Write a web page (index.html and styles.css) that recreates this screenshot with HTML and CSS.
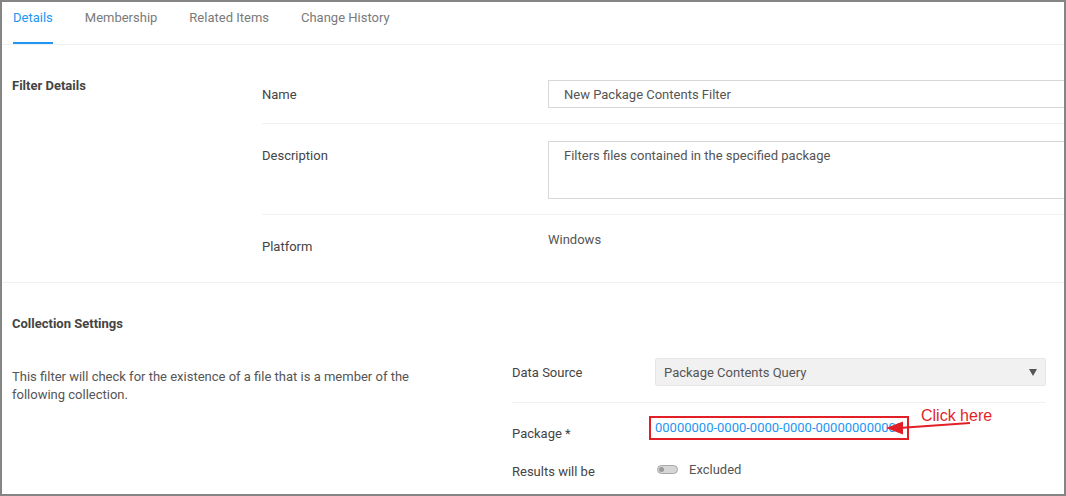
FILE: index.html
```html
<!DOCTYPE html>
<html lang="en">
<head>
<meta charset="utf-8">
<title>Filter</title>
<link rel="stylesheet" href="styles.css">
</head>
<body>
<div class="frame">
  <nav class="tabs">
    <div class="tab active">Details</div>
    <div class="tab">Membership</div>
    <div class="tab">Related Items</div>
    <div class="tab">Change History</div>
  </nav>

  <section class="section filter">
    <div class="section-title">Filter Details</div>
    <div class="fields">
      <div class="row row-name">
        <div class="label">Name</div>
        <div class="value"><div class="input">New Package Contents Filter</div></div>
      </div>
      <div class="row row-desc">
        <div class="label">Description</div>
        <div class="value"><div class="textarea">Filters files contained in the specified package</div></div>
      </div>
      <div class="row row-platform">
        <div class="label">Platform</div>
        <div class="value text">Windows</div>
      </div>
    </div>
  </section>

  <section class="collection">
    <div class="coll-title">Collection Settings</div>
    <div class="coll-body">
      <p class="coll-desc">This filter will check for the existence of a file that is a member of the following collection.</p>
      <div class="coll-fields">
        <div class="crow crow-source">
          <div class="label">Data Source</div>
          <div class="value">
            <div class="select"><span>Package Contents Query</span><span class="caret"></span></div>
          </div>
        </div>
        <div class="crow crow-package">
          <div class="label">Package *</div>
          <div class="value text">
            <span class="anchor">
              <a class="link" href="#">00000000-0000-0000-0000-000000000000</a>
              <span class="annot-box"></span>
              <svg class="annot-arrow" width="90" height="22" viewBox="0 0 90 22">
                <line x1="14" y1="13" x2="85" y2="8" stroke="#e21f26" stroke-width="2"/>
                <polygon points="1,13 18,6.5 18,19.5" fill="#e21f26"/>
              </svg>
              <span class="annot-text">Click here</span>
            </span>
          </div>
        </div>
        <div class="crow crow-results">
          <div class="label">Results will be</div>
          <div class="value text toggle-wrap">
            <span class="toggle"><span class="knob"></span></span>
            <span>Excluded</span>
          </div>
        </div>
      </div>
    </div>
  </section>
</div>
</body>
</html>
```

FILE: styles.css
```css
* { box-sizing: border-box; }
html, body { margin: 0; padding: 0; background: #fff; }
body {
  font-family: Roboto, "Liberation Sans", Arial, sans-serif;
  font-size: 13px;
  line-height: 15px;
  color: #444;
}
.frame {
  width: 1066px;
  height: 496px;
  border: 2px solid #858585;
  overflow: hidden;
  background: #fff;
}

/* tabs */
.tabs {
  display: flex;
  gap: 32px;
  padding-left: 11px;
  border-bottom: 1px solid #f1f1f1;
  height: 43px;
}
.tab {
  height: 42px;
  padding-top: 8px;
  color: #7a7a7a;
  border-bottom: 2px solid transparent;
}
.tab.active {
  color: #2196f3;
  border-bottom-color: #2196f3;
}

/* filter details */
.section.filter {
  display: flex;
  border-bottom: 1px solid #f1f1f1;
}
.section-title {
  width: 260px;
  flex: none;
  padding: 33px 0 0 10px;
  font-weight: 700;
  color: #444;
}
.fields {
  flex: 1;
  min-width: 0;
  padding-top: 19px;
}
.row {
  display: grid;
  grid-template-columns: 286px 1fr;
}
.label { padding-top: 7px; color: #444; }
.value { min-width: 0; color: #555; }
.row-name { padding: 16px 0 15px; border-bottom: 1px solid #f1f1f1; }
.row-desc { padding: 17px 0 15px; border-bottom: 1px solid #f1f1f1; }
.row-platform { padding: 17px 0 28px; }
.input, .textarea {
  width: 560px;
  border: 1px solid #d8d8d8;
  padding-left: 15px;
  color: #555;
}
.input { height: 28px; padding-top: 6px; }
.textarea { height: 58px; padding-top: 6px; }

/* collection */
.collection { padding: 33px 0 0 10px; }
.coll-title { font-weight: 700; color: #444; }
.coll-body { display: flex; margin-top: 11px; }
.coll-desc {
  margin: 0;
  width: 500px;
  flex: none;
  padding: 26px 90px 0 0;
  line-height: 18px;
  color: #555;
}
.coll-fields { flex: 1; padding-right: 18px; }
.crow {
  display: grid;
  grid-template-columns: 143px 1fr;
}
.crow-source { padding: 16px 0 16px; border-bottom: 1px solid #f1f1f1; }
.crow-package { padding: 17px 0 1px; }
.crow-package .label { padding-top: 6px; }
.crow-results { padding: 17px 0 0; }
.crow-results .label { padding-top: 5px; }

.select {
  height: 28px;
  background: #f1f1f1;
  border: 1px solid #e6e6e6;
  border-radius: 2px;
  padding: 6px 8px 0 8px;
  display: flex;
  justify-content: space-between;
  color: #555;
}
.caret {
  width: 0; height: 0;
  margin-top: 4px;
  border-left: 4px solid transparent;
  border-right: 4px solid transparent;
  border-top: 7px solid #555;
}

.anchor { position: relative; display: inline-block; }
.link { color: #2196f3; text-decoration: none; }
.annot-box {
  position: absolute;
  left: -6px;
  top: -4px;
  width: 260px;
  height: 24px;
  border: 2px solid #e21f26;
}
.annot-arrow {
  position: absolute;
  left: 230px;
  top: -5px;
}
.annot-text {
  position: absolute;
  left: 266px;
  top: -13px;
  font-family: "Liberation Sans", Arial, sans-serif;
  font-size: 16px;
  line-height: 18px;
  color: #e21f26;
  white-space: nowrap;
}

.toggle-wrap { display: flex; align-items: center; gap: 11px; padding-left: 2px; }
.toggle {
  position: relative;
  width: 21px;
  height: 9px;
  border-radius: 5px;
  background: #d6d6d6;
  border: 1px solid #a8a8a8;
}
.knob {
  position: absolute;
  left: 1px;
  top: 1px;
  width: 5px;
  height: 5px;
  border-radius: 50%;
  background: #9a9a9a;
}
```
